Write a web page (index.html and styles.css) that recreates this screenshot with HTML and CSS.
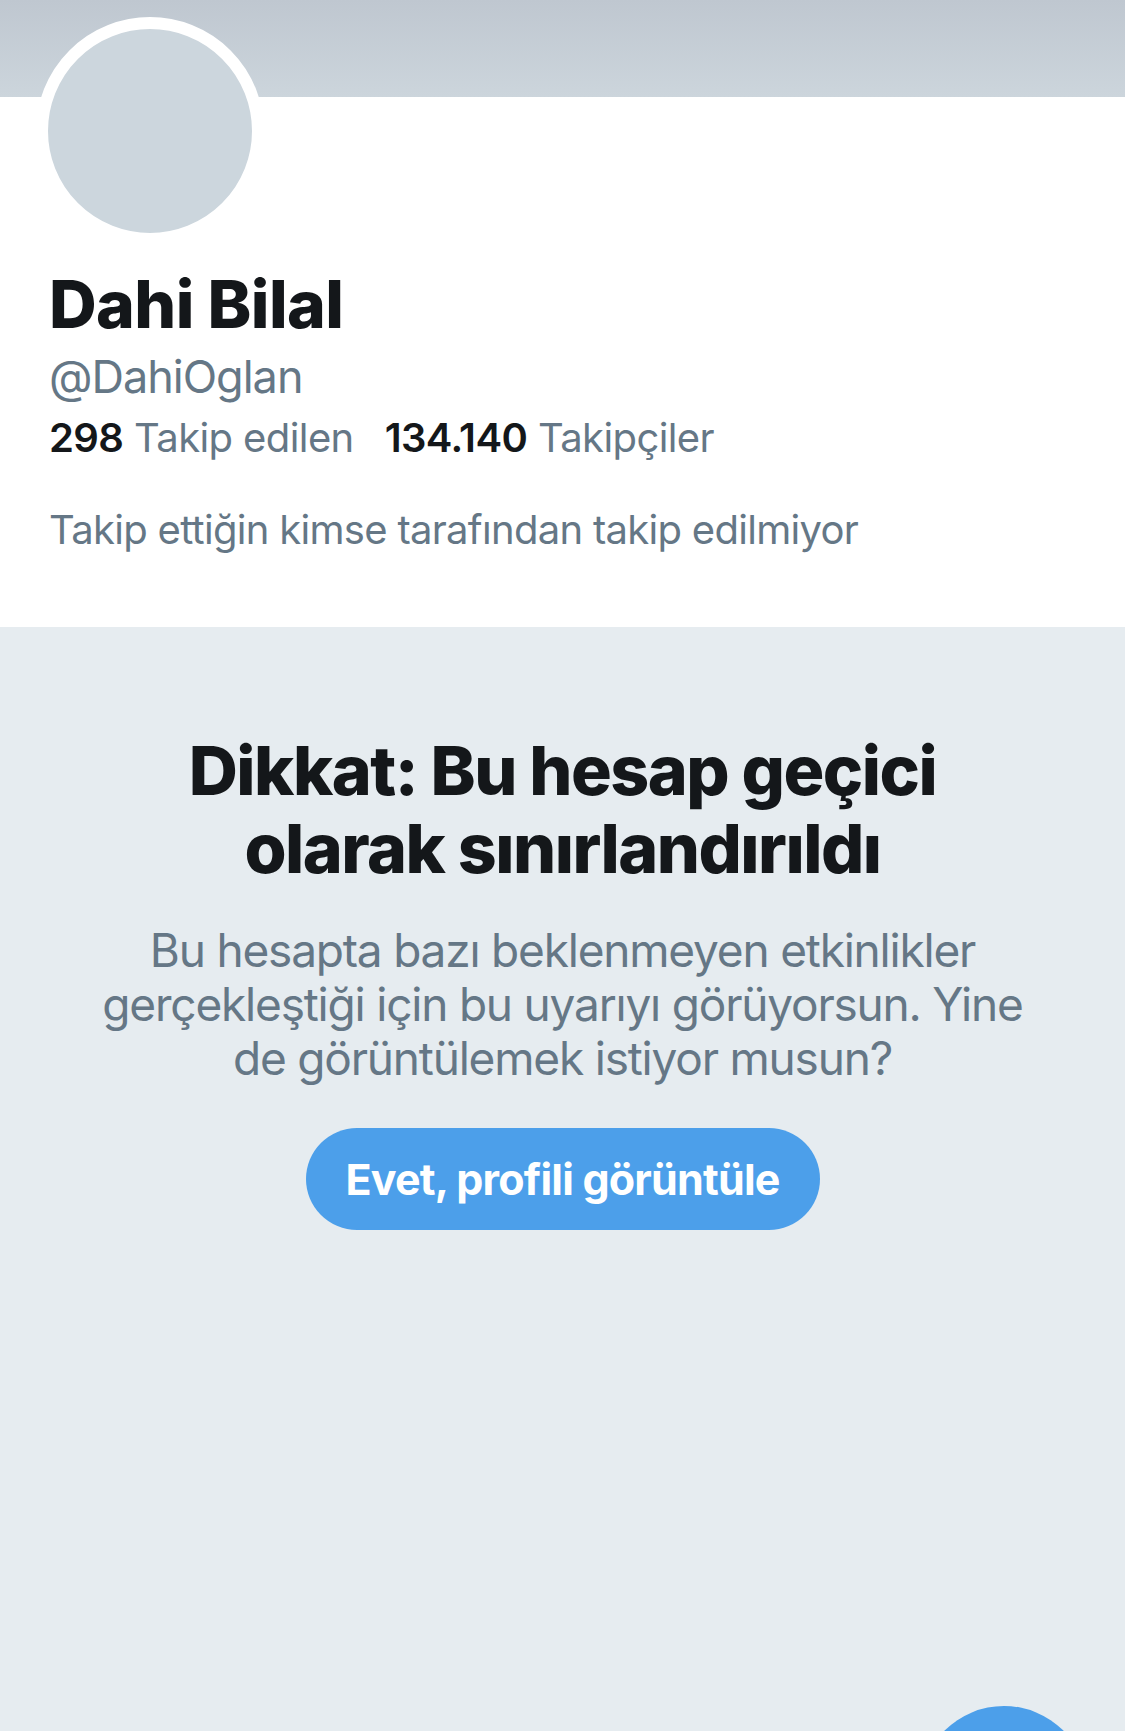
FILE: index.html
```html
<!DOCTYPE html>
<html lang="tr">
<head>
<meta charset="utf-8">
<title>Dahi Bilal (@DahiOglan)</title>
<link rel="stylesheet" href="styles.css">
</head>
<body>
<div class="page">
  <div class="banner"></div>
  <section class="profile">
    <div class="avatar"></div>
    <div class="info">
      <h1 class="name">Dahi Bilal</h1>
      <div class="handle">@DahiOglan</div>
      <div class="stats">
        <span class="stat"><b>298</b> Takip edilen</span>
        <span class="stat"><b>134.140</b> Takipçiler</span>
      </div>
      <div class="note">Takip ettiğin kimse tarafından takip edilmiyor</div>
    </div>
  </section>
  <section class="warning">
    <h2 class="title">Dikkat: Bu hesap geçici olarak sınırlandırıldı</h2>
    <p class="desc">Bu hesapta bazı beklenmeyen etkinlikler gerçekleştiği için bu uyarıyı görüyorsun. Yine de görüntülemek istiyor musun?</p>
    <button class="btn">Evet, profili görüntüle</button>
  </section>
  <div class="fab"></div>
</div>
</body>
</html>
```

FILE: styles.css
```css
* { box-sizing: border-box; }
html, body { margin: 0; padding: 0; }
body {
  width: 1125px;
  height: 1731px;
  overflow: hidden;
  font-family: Inter, "Noto Sans", "Liberation Sans", sans-serif;
  background: #e6ecf0;
}
.page {
  position: relative;
  width: 1125px;
  height: 1731px;
  overflow: hidden;
  display: flex;
  flex-direction: column;
}
.banner {
  height: 97px;
  background: linear-gradient(#bfc7d0, #ccd5dc);
  flex: none;
}
.profile {
  background: #ffffff;
  height: 530px;
  flex: none;
}
.avatar {
  width: 228px;
  height: 228px;
  margin-top: -80px;
  margin-left: 36px;
  border-radius: 50%;
  border: 12px solid #ffffff;
  background: #ccd6dd;
}
.info {
  padding-left: 49px;
}
.name {
  margin: 21px 0 0;
  font-size: 66px;
  line-height: 76px;
  font-weight: 800;
  letter-spacing: -0.6px;
  color: #14171a;
}
.handle {
  margin-top: 8px;
  font-size: 45px;
  line-height: 54px;
  color: #657786;
  letter-spacing: -1px;
}
.stats {
  margin-top: 9px;
  display: flex;
  gap: 31px;
  font-size: 40px;
  line-height: 50px;
  color: #657786;
  letter-spacing: -0.6px;
}
.stat b {
  color: #14171a;
  font-weight: 600;
}
.note {
  margin-top: 42px;
  font-size: 40px;
  line-height: 50px;
  color: #657786;
  letter-spacing: -0.7px;
}
.warning {
  flex: 1;
  display: flex;
  flex-direction: column;
  align-items: center;
  padding-top: 104px;
}
.title {
  margin: 0;
  width: 800px;
  text-align: center;
  font-size: 68px;
  line-height: 78px;
  font-weight: 800;
  letter-spacing: -1.5px;
  color: #14171a;
}
.desc {
  margin: 36px 0 0;
  width: 935px;
  text-align: center;
  font-size: 46px;
  line-height: 54px;
  letter-spacing: -1.2px;
  color: #657786;
}
.btn {
  margin-top: 43px;
  width: 514px;
  height: 102px;
  border: none;
  border-radius: 51px;
  background: #4c9fea;
  color: #ffffff;
  font-family: inherit;
  font-size: 43px;
  font-weight: 700;
  letter-spacing: -0.8px;
}
.fab {
  position: absolute;
  left: 920px;
  top: 1706px;
  width: 168px;
  height: 168px;
  border-radius: 50%;
  background: #4c9fea;
}
```
